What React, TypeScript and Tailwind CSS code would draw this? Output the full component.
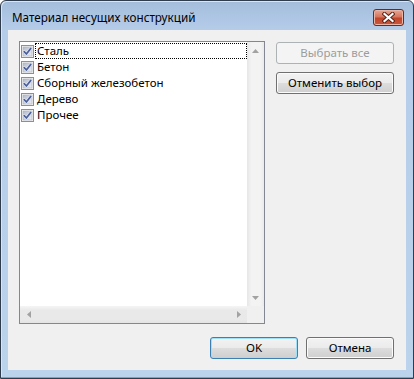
import * as React from "react";

const items = ["Сталь", "Бетон", "Сборный железобетон", "Дерево", "Прочее"];

// win7 style push button look
const btnBase =
  "h-[22px] rounded-[3px] border text-[11.5px] leading-none flex items-center justify-center";
const btnFace =
  "text-black bg-[linear-gradient(#f2f2f2_0%,#ebebeb_50%,#dddddd_50%,#cfcfcf_100%)]";
const btnNormal = "border-[#707070] shadow-[inset_0_0_0_1px_#fbfbfb] " + btnFace;

function Check() {
  return (
    <svg width="13" height="13" viewBox="0 0 13 13" className="shrink-0">
      <defs>
        <linearGradient id="cbfill" x1="0" y1="0" x2="1" y2="1">
          <stop offset="0" stopColor="#b3bccc" />
          <stop offset="1" stopColor="#eceef3" />
        </linearGradient>
      </defs>
      <rect x="0.5" y="0.5" width="12" height="12" fill="#f4f4f4" stroke="#8e8f8f" />
      <rect x="2" y="2" width="9" height="9" fill="url(#cbfill)" stroke="#a9b0bc" strokeWidth="0.6" />
      <path d="M3.2 6.6 L5.4 9 L9.8 3.4" fill="none" stroke="#ffffff" strokeWidth="2.8" strokeLinecap="round" strokeLinejoin="round" opacity="0.7" />
      <path d="M3.2 6.6 L5.4 9 L9.8 3.4" fill="none" stroke="#4a5f9e" strokeWidth="1.7" strokeLinecap="round" strokeLinejoin="round" />
    </svg>
  );
}

// tiny scrollbar arrow, dir = up | down | left | right
function Arrow({ dir }: { dir: "up" | "down" | "left" | "right" }) {
  const pts = {
    up: "0,4 3.5,0 7,4",
    down: "0,0 7,0 3.5,4",
    left: "4,0 4,7 0,3.5",
    right: "0,0 0,7 4,3.5",
  }[dir];
  const w = dir === "up" || dir === "down" ? 7 : 4;
  const h = dir === "up" || dir === "down" ? 4 : 7;
  return (
    <svg width={w} height={h} viewBox={`0 0 ${w} ${h}`}>
      <polygon points={pts} fill="#a2a2a2" />
    </svg>
  );
}

export default function App() {
  return (
    <div className="h-[379px] w-[414px] bg-white font-['Segoe_UI','Noto_Sans',sans-serif] text-[11.5px]">
      {/* ---------- window frame ---------- */}
      <div className="flex h-full flex-col rounded-t-[6px] border border-[#2f3c4e] bg-[linear-gradient(#a3bddb_0px,#b6cdea_30px,#bcd3ec_100%)] shadow-[inset_0_-1px_0_#58b3cb,inset_1px_1px_0_#d7e5f4]">
        {/* title bar */}
        <div className="flex h-[29px] items-start justify-between pl-[11px] pr-[9px] pt-[8px]">
          <span className="text-[11.7px] leading-[16px] text-black">Материал несущих конструкций</span>
          <div className="flex h-[17px] w-[31px] items-center justify-center rounded-[3px] border border-[#6b2a1f] bg-[linear-gradient(#e8a895_0%,#d7765d_45%,#c2452a_55%,#c8583d_100%)] shadow-[inset_0_0_0_1px_#eab4a6]">
            <svg width="13" height="11" viewBox="0 0 13 11">
              <path d="M2.5 2 L10.5 9 M10.5 2 L2.5 9" stroke="#5b2318" strokeWidth="4.2" strokeLinecap="square" />
              <path d="M2.5 2 L10.5 9 M10.5 2 L2.5 9" stroke="#ffffff" strokeWidth="2.2" strokeLinecap="square" />
            </svg>
          </div>
        </div>

        {/* client area */}
        <div className="mx-[7px] mb-[8px] flex flex-1 flex-col bg-[#f0f0f0] pb-[11px] pl-[11px] pr-[12px] pt-[11px]">
          <div className="flex">
            {/* list box */}
            <div className="flex h-[283px] w-[246px] flex-col border border-[#828790] bg-white">
              <div className="flex flex-1">
                <div className="flex flex-1 flex-col pt-[1px]">
                  {items.map((it, i) => (
                    <div key={it} className="flex h-[16px] items-center pl-[1px]">
                      <Check />
                      <span
                        className={
                          "ml-[1px] flex h-[16px] flex-1 items-center border pl-[1px] leading-none text-black " +
                          (i === 0 ? "border-dotted border-black" : "border-transparent")
                        }
                      >
                        {it}
                      </span>
                    </div>
                  ))}
                </div>
                {/* vertical scrollbar */}
                <div className="flex w-[17px] flex-col bg-[linear-gradient(to_right,#e6e6e6,#f3f3f3_25%,#f3f3f3_80%,#eaeaea)]">
                  <div className="flex h-[17px] items-center justify-center">
                    <Arrow dir="up" />
                  </div>
                  <div className="flex-1" />
                  <div className="flex h-[17px] items-center justify-center">
                    <Arrow dir="down" />
                  </div>
                </div>
              </div>
              {/* horizontal scrollbar */}
              <div className="flex h-[17px]">
                <div className="flex flex-1 bg-[linear-gradient(#f5f5f5,#e9e9e9_25%,#e9e9e9_80%,#e4e4e4)]">
                  <div className="flex w-[17px] items-center justify-center">
                    <Arrow dir="left" />
                  </div>
                  <div className="flex-1" />
                  <div className="flex w-[17px] items-center justify-center">
                    <Arrow dir="right" />
                  </div>
                </div>
                <div className="w-[17px] bg-[#f0f0f0]" />
              </div>
            </div>

            {/* right buttons */}
            <div className="ml-[11px] flex flex-1 flex-col gap-[8px] pt-[1px]">
              <div className={btnBase + " border-[#adb2b5] bg-[#f4f4f4] text-[#9c9c9c]"}>Выбрать все</div>
              <div className={btnBase + " " + btnNormal}>Отменить выбор</div>
            </div>
          </div>

          {/* bottom row */}
          <div className="mt-[13px] flex justify-end gap-[8px]">
            <div className={btnBase + " w-[88px] border-[#3c7fb1] shadow-[inset_0_0_0_1px_#9fe0f8] " + btnFace}>
              OK
            </div>
            <div className={btnBase + " w-[88px] " + btnNormal}>Отмена</div>
          </div>
        </div>
      </div>
    </div>
  );
}
